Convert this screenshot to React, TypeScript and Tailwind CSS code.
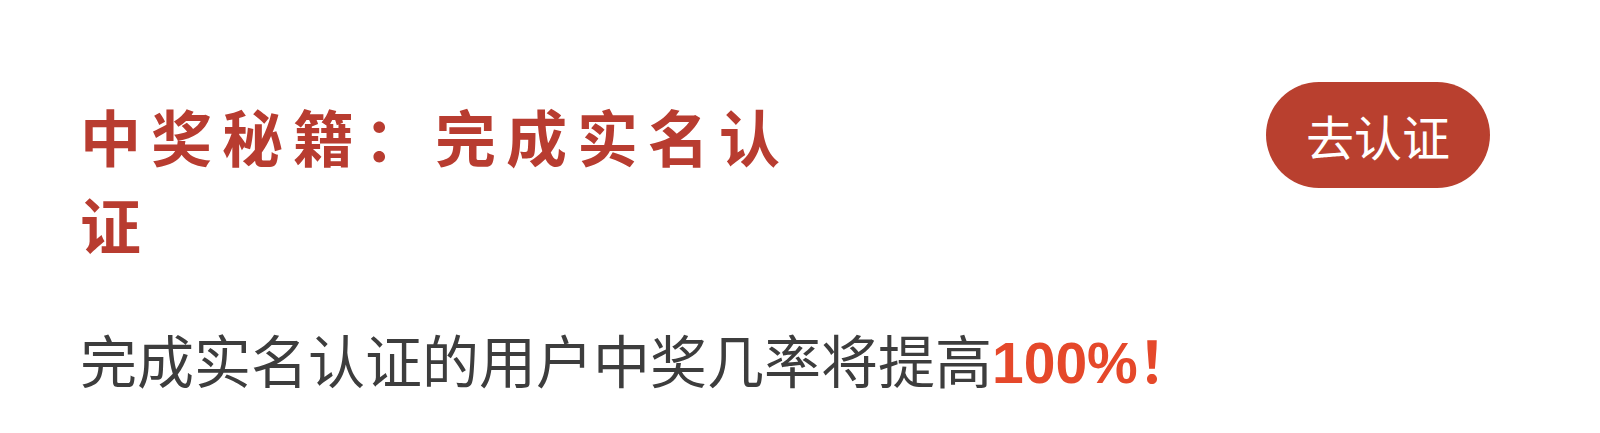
export default function App() {
  return (
    <div className="h-[433px] w-[1600px] bg-white px-[80px] pt-[92px] font-['Noto_Sans_CJK_SC','Noto_Sans',sans-serif]">
      <div className="flex items-start justify-between">
        <h1 className="w-[760px] text-[61px] font-bold leading-[88px] tracking-[10px] text-[#b83c30]">
          中奖秘籍：完成实名认证
        </h1>
        <button className="mr-[30px] mt-[-10px] h-[106px] w-[224px] rounded-full bg-[#b9402f] text-[48px] text-white">
          去认证
        </button>
      </div>
      <p className="mt-[54px] text-[57px] leading-[72px] text-[#3d3d3d]">
        完成实名认证的用户中奖几率将提高
        <span className="font-['Liberation_Sans','Noto_Sans_CJK_SC',sans-serif] font-bold text-[#e5482a]">100%！</span>
      </p>
    </div>
  );
}
